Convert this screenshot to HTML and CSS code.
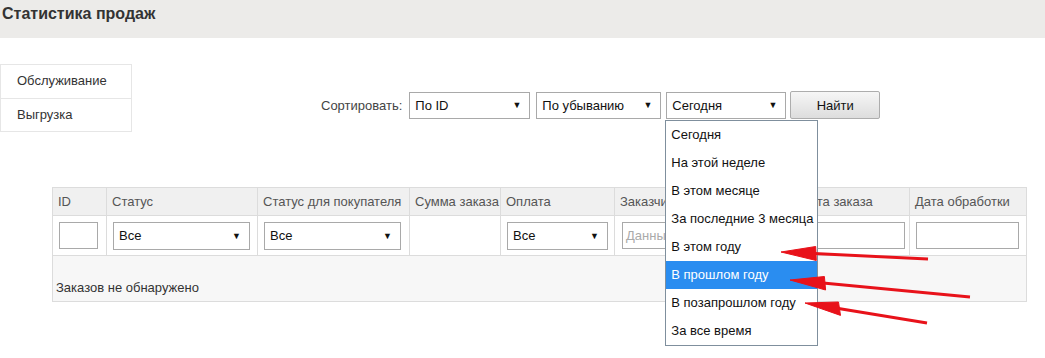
FILE: index.html
```html
<!DOCTYPE html>
<html lang="ru">
<head>
<meta charset="utf-8">
<link rel="stylesheet" href="styles.css">
</head>
<body>
<div class="page">
  <div class="topbar"><h1 class="title">Статистика продаж</h1></div>
  <div class="main">
    <ul class="sidemenu">
      <li class="sideitem">Обслуживание</li>
      <li class="sideitem">Выгрузка</li>
    </ul>
    <div class="sortform">
      <span class="sortlabel">Сортировать:</span>
      <div class="sel sel-a"><span>По ID</span><span class="caret">▼</span></div>
      <div class="sel sel-b"><span>По убыванию</span><span class="caret">▼</span></div>
      <div class="selwrap">
        <div class="sel sel-c"><span>Сегодня</span><span class="caret">▼</span></div>
        <ul class="droplist">
          <li class="opt">Сегодня</li>
          <li class="opt">На этой неделе</li>
          <li class="opt">В этом месяце</li>
          <li class="opt">За последние 3 месяца</li>
          <li class="opt">В этом году</li>
          <li class="opt opt-active">В прошлом году</li>
          <li class="opt">В позапрошлом году</li>
          <li class="opt">За все время</li>
        </ul>
      </div>
      <button class="btn">Найти</button>
    </div>
  </div>
  <table class="orders">
    <colgroup>
      <col class="c-id"><col class="c-status"><col class="c-bstatus"><col class="c-sum"><col class="c-pay"><col class="c-cust"><col class="c-date"><col class="c-proc">
    </colgroup>
    <thead>
      <tr class="head">
        <th>ID</th><th>Статус</th><th>Статус для покупателя</th><th>Сумма заказа</th><th>Оплата</th><th>Заказчик</th><th>Дата заказа</th><th>Дата обработки</th>
      </tr>
      <tr class="filters">
        <td><div class="inp inp-id"></div></td>
        <td><div class="sel sel-t"><span>Все</span><span class="caret">▼</span></div></td>
        <td><div class="sel sel-t"><span>Все</span><span class="caret">▼</span></div></td>
        <td></td>
        <td><div class="sel sel-t"><span>Все</span><span class="caret">▼</span></div></td>
        <td><div class="inp inp-cust"><span class="ph">Данные покупателя</span></div></td>
        <td><div class="inp inp-date"></div></td>
        <td><div class="inp inp-date"></div></td>
      </tr>
    </thead>
    <tbody>
      <tr class="empty"><td colspan="8">Заказов не обнаружено</td></tr>
    </tbody>
  </table>
  <svg class="arrows" width="1045" height="358" viewBox="0 0 1045 358">
    <g fill="#e8121a" stroke="#e8121a">
      <line x1="814" y1="253.6" x2="928" y2="259" stroke-width="3"/>
      <polygon points="781,252 815.7,246.5 816.3,260.5" stroke-width="1"/>
      <line x1="823" y1="283.1" x2="970" y2="297" stroke-width="3"/>
      <polygon points="790,280 824.4,276.5 825.6,290" stroke-width="1"/>
      <line x1="837" y1="308.3" x2="927" y2="323" stroke-width="3"/>
      <polygon points="805,303 838.5,302 840.5,315.4" stroke-width="1"/>
    </g>
  </svg>
</div>
</body>
</html>
```
FILE: styles.css
```css
* { box-sizing: border-box; }
html, body { margin: 0; padding: 0; background: #fff; }
body {
  font-family: "Liberation Sans", Arial, sans-serif;
  font-size: 13px;
  color: #333;
}
.page { position: relative; width: 1045px; height: 358px; overflow: hidden; }

.topbar {
  height: 38px;
  background: #ecebe9;
  display: flex;
  align-items: center;
  padding: 0 0 10px 2px;
}
.title {
  margin: 0;
  font-size: 16px;
  font-weight: bold;
  color: #333;
}

.main { display: flex; align-items: flex-start; }
.sidemenu {
  list-style: none;
  margin: 26px 0 0 0;
  padding: 0;
  width: 132px;
  border: 1px solid #e6e6e6;
}
.sideitem {
  height: 33px;
  line-height: 32px;
  padding-left: 16px;
  color: #333;
}
.sideitem + .sideitem { border-top: 1px solid #e6e6e6; }

.sortform {
  display: flex;
  align-items: center;
  margin: 53px 0 0 189px;
}
.sortlabel { margin-right: 8px; color: #444; }

.sel {
  display: flex;
  justify-content: space-between;
  align-items: center;
  height: 27px;
  border: 1px solid #a9a9a9;
  background: #fff;
  padding: 0 8px 0 5px;
  color: #111;
}
.caret { font-size: 9px; color: #111; }
.sel-a { width: 121px; margin-left: -1px; }
.sel-b { width: 125px; margin-left: 6px; }
.selwrap { position: relative; margin-left: 5px; }
.sel-c { width: 120px; }
.btn {
  margin-left: 4px;
  width: 90px;
  height: 28px;
  border: 1px solid #adadad;
  border-radius: 2px;
  background: linear-gradient(#f6f6f6, #dddddd);
  font-family: inherit;
  font-size: 13px;
  color: #111;
  padding: 0;
}

.droplist {
  position: absolute;
  top: 28px;
  left: -1px;
  z-index: 5;
  width: 153px;
  margin: 0;
  padding: 0;
  list-style: none;
  background: #fff;
  border: 1px solid #7f8f9d;
}
.opt {
  height: 28px;
  line-height: 28px;
  padding-left: 5px;
  color: #111;
  white-space: nowrap;
}
.opt-active { background: #2a8df0; color: #fff; }

.orders {
  margin: 55px 0 0 52px;
  width: 974px;
  table-layout: fixed;
  border-collapse: collapse;
}
.c-id { width: 54px; }
.c-status { width: 151px; }
.c-bstatus { width: 152px; }
.c-sum { width: 91px; }
.c-pay { width: 114px; }
.c-cust { width: 181px; }
.c-date { width: 114px; }
.c-proc { width: 117px; }
.orders th, .orders td {
  border: 1px solid #dcdcdc;
  padding: 0 6px;
  text-align: left;
  font-weight: normal;
  white-space: nowrap;
  overflow: hidden;
}
.head th { height: 28px; background: #f0f0f0; color: #555; padding-left: 5px; }
.filters td { height: 40px; background: #fff; }
.inp {
  height: 27px;
  border: 1px solid #a9a9a9;
  background: #fff;
  overflow: hidden;
  display: flex;
  align-items: center;
  padding-left: 3px;
}
.inp-id { width: 39px; }
.inp-cust { width: 170px; margin-left: 1px; }
.inp-date { width: 103px; }
.ph { color: #aaa; }
.sel-t { width: 137px; height: 28px; }
.filters td:nth-child(5) .sel-t { width: 101px; }
.empty td {
  height: 46px;
  background: #f7f7f7;
  vertical-align: bottom;
  padding: 0 3px 6px;
  color: #333;
}

.arrows { position: absolute; left: 0; top: 0; z-index: 10; pointer-events: none; }
```
